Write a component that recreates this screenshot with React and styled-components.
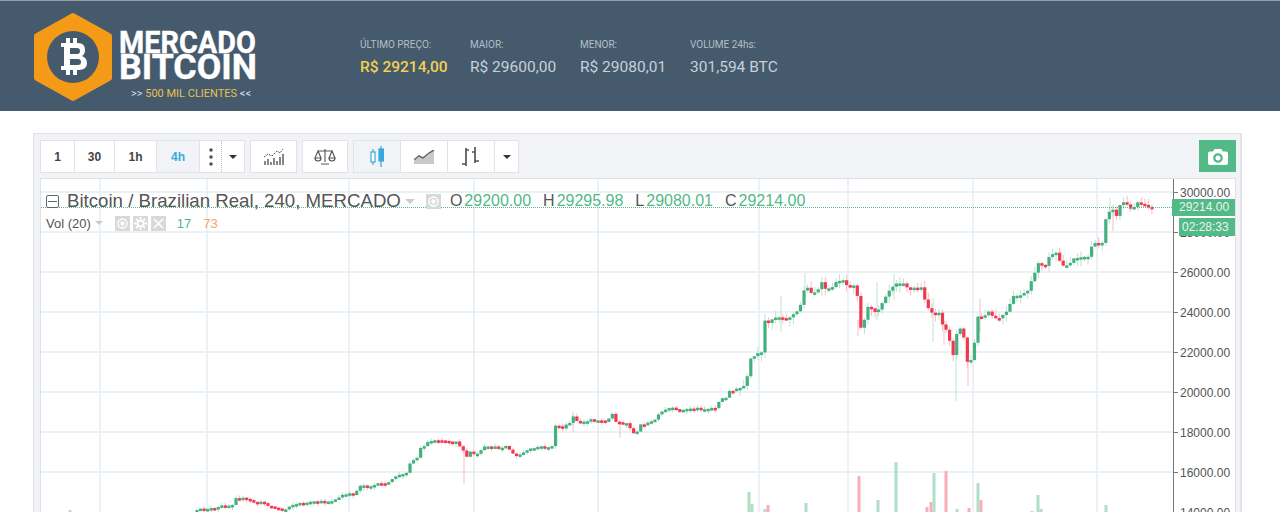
import React from "react";
import styled, { createGlobalStyle } from "styled-components";

const GREEN = "#53b987";
const RED = "#f0394f";

const GlobalStyle = createGlobalStyle`
  html, body { margin: 0; height: 512px; overflow: hidden; background: #fff; }
  body { font-family: "Liberation Sans", Arial, sans-serif; }
`;

const Header = styled.header`
  height: 110px;
  box-sizing: content-box;
  border-top: 1px solid #9a9ea2;
  background: #455a6c;
  display: flex;
`;
const Brand = styled.div`
  width: 360px;
  padding: 11px 0 0 33px;
  box-sizing: border-box;
  display: flex;
  gap: 6px;
`;
const BrandText = styled.div`
  display: flex;
  flex-direction: column;
  padding-top: 18px;
`;
const BrandLine = styled.div`
  font-family: Roboto, sans-serif;
  font-weight: 700;
  color: #fff;
  white-space: nowrap;
  -webkit-text-stroke: 0.4px #fff;
  transform-origin: left top;
  transform: scaleX(${(p) => p.$sx});
  font-size: ${(p) => p.$size}px;
  line-height: ${(p) => p.$lh}px;
`;
const Clients = styled.div`
  font-family: Roboto, sans-serif;
  font-size: 11px;
  line-height: 12px;
  margin: 7px 0 0 12px;
  color: #d5dde3;
  white-space: nowrap;
  span { color: #e6c153; }
`;
const Stats = styled.div`
  display: flex;
  padding-top: 38px;
`;
const Stat = styled.div`
  width: 110px;
  font-family: Roboto, sans-serif;
`;
const StatLabel = styled.div`
  font-size: 10px;
  line-height: 12px;
  color: #b4bfc8;
`;
const StatValue = styled.div`
  font-size: 15.5px;
  line-height: 20px;
  margin-top: 6px;
  white-space: nowrap;
  font-weight: ${(p) => (p.$hi ? 500 : 400)};
  color: ${(p) => (p.$hi ? "#f5cf50" : "#c6d1da")};
`;

const Frame = styled.section`
  margin: 22px 38px 0 33px;
  height: 400px;
  background: #f1f3f6;
  border: 1px solid #e0e3e8;
  border-width: 1px 2px 0 1px;
  padding: 6px 4px 0 6px;
  box-sizing: border-box;
  width: 1209px;
`;
const Toolbar = styled.div`
  display: flex;
  gap: 5px;
  height: 33px;
  margin-bottom: 5px;
`;
const Group = styled.div`
  display: flex;
  gap: 1px;
  background: #e0e3e8;
  border: 1px solid #e0e3e8;
  height: 33px;
  box-sizing: border-box;
`;
const Btn = styled.div`
  width: ${(p) => p.$w}px;
  display: flex;
  align-items: center;
  justify-content: center;
  background: ${(p) => (p.$on ? "#f1f3f6" : "#fff")};
  color: ${(p) => (p.$on ? "#38a9e0" : "#444")};
  font-size: 12px;
  font-weight: 700;
`;
const DotDivider = styled(Btn)`
  border-right: 1px dotted #bbb;
  margin-right: -1px;
`;
const Spacer = styled.div`
  flex: 1;
`;
const Camera = styled.div`
  width: 37px;
  height: 32px;
  background: ${GREEN};
  display: flex;
  align-items: center;
  justify-content: center;
`;
const Chart = styled.div`
  position: relative;
  height: 340px;
  display: flex;
  background: #fff;
  border: 1px solid #dfe3e8;
  border-bottom: 0;
  overflow: hidden;
`;
const Plot = styled.svg`
  display: block;
  width: 1132px;
  height: 333px;
  flex: none;
`;
const Axis = styled.div`
  flex: 1;
  border-left: 1px solid #777;
  padding-top: 6px;
  display: flex;
  flex-direction: column;
`;
const Tick = styled.div`
  flex: none;
  height: 40px;
  line-height: 16px;
  font-size: 12px;
  color: #555;
  padding-left: 6px;
  position: relative;
  &::before {
    content: "";
    position: absolute;
    left: 0;
    top: 7px;
    width: 4px;
    height: 1px;
    background: #777;
  }
`;
const Legend = styled.div`
  position: absolute;
  left: 5px;
  top: 11px;
  color: #555;
  white-space: nowrap;
`;
const TitleRow = styled.div`
  display: flex;
  align-items: center;
  height: 22px;
`;
const Collapse = styled.span`
  width: 11px;
  height: 11px;
  border: 1px solid #666;
  border-radius: 2px;
  margin-right: 8px;
  position: relative;
  &::after {
    content: "";
    position: absolute;
    left: 1px;
    right: 1px;
    top: 5px;
    height: 1px;
    background: #666;
  }
`;
const Title = styled.span`
  font-size: 18.67px;
`;
const Caret = styled.span`
  width: 0;
  height: 0;
  border: ${(p) => p.$s || 4}px solid transparent;
  border-top-color: ${(p) => p.$c || "#ccc"};
  border-bottom: 0;
  margin-left: ${(p) => p.$ml || 0}px;
`;
const IconBox = styled.span`
  width: 15px;
  height: 15px;
  background: #d9d9d9;
  margin-left: ${(p) => p.$ml || 0}px;
  display: inline-flex;
  align-items: center;
  justify-content: center;
`;
const Ohlc = styled.span`
  font-size: 16px;
  margin-left: ${(p) => p.$ml}px;
  b {
    font-weight: 400;
    color: ${GREEN};
    margin-left: 2px;
  }
`;
const VolRow = styled.div`
  display: flex;
  align-items: center;
  height: 18px;
  margin-top: 2px;
  font-size: 13px;
`;
const VolNum = styled.span`
  margin-left: ${(p) => p.$ml}px;
  color: ${(p) => p.$c};
`;
const PriceTag = styled.div`
  position: absolute;
  right: 0;
  top: ${(p) => p.$top}px;
  width: ${(p) => p.$w}px;
  height: ${(p) => p.$h}px;
  line-height: ${(p) => p.$h}px;
  background: ${GREEN};
  color: #eaf7f0;
  font-size: 12px;
  padding-left: ${(p) => p.$pl}px;
  box-sizing: border-box;
`;

const PTS = [[197,511],[205,508],[215,509],[222,506],[232,505],[236,497],[245,499],[255,502],[265,503],[270,506],[280,509],[285,510],[290,505],[297,504],[305,503],[320,502],[330,501],[338,499],[342,495],[355,494],[360,485],[370,486],[380,484],[390,483],[395,476],[406,474],[408,464],[418,457],[420,449],[428,442],[437,439],[447,441],[457,441],[462,450],[467,457],[470,452],[477,455],[485,447],[492,448],[507,446],[515,457],[527,451],[537,447],[552,447],[555,425],[563,428],[570,423],[572,415],[577,422],[587,422],[590,419],[607,421],[612,413],[615,422],[627,423],[632,432],[637,433],[640,425],[650,423],[657,418],[660,413],[670,408],[680,411],[692,408],[707,409],[717,407],[720,399],[728,398],[730,387],[733,391],[743,387],[747,382],[748,363],[752,358],[758,354],[763,353],[764,320],[767,323],[775,317],[783,317],[785,320],[797,312],[802,302],[805,284],[810,292],[817,292],[822,283],[827,291],[837,282],[842,278],[848,287],[857,283],[858,323],[862,330],[867,307],[877,312],[887,293],[895,283],[903,282],[908,288],[923,288],[925,300],[930,312],[933,315],[938,310],[942,325],[948,333],[953,355],[958,327],[963,332],[968,366],[973,357],[977,317],[983,318],[988,312],[997,320],[1007,312],[1013,297],[1027,293],[1033,278],[1038,262],[1045,268],[1048,257],[1058,253],[1061,267],[1070,263],[1075,257],[1088,257],[1092,245],[1103,242],[1105,220],[1112,205],[1115,223],[1118,207],[1125,201],[1130,210],[1138,202],[1147,205],[1152,208]];

const WICKS = [[781,296,332,1],[877,282,320,1],[894,274,300,1],[933,298,342,1],[956,355,401,1],[968,360,386,0],[858,320,336,0],[944,320,345,0],[980,299,332,0],[805,273,290,1],[464,445,484,0],[620,420,438,0],[573,412,432,0],[1113,205,231,0],[1110,198,215,1]];

const VOLS = [[70,510,1],[749,492,1],[752,504,1],[765,509,1],[768,505,0],[806,503,1],[859,476,0],[878,500,1],[896,462,1],[927,507,0],[931,502,0],[934,473,1],[946,471,0],[957,509,1],[969,508,0],[978,483,1],[981,500,0],[1032,511,1],[1038,495,1],[1041,509,1],[1106,505,1]];

const GRID_X = [100, 207, 349, 474, 598, 759, 848, 973, 1097];
const GRID_Y = [192, 232, 272, 312, 352, 392, 432, 472];
const TICKS = ["30000.00", "28000.00", "26000.00", "24000.00", "22000.00", "20000.00", "18000.00", "16000.00", "14000.00"];

function buildCandles() {
  let seed = 12345;
  const rnd = () => {
    seed = (seed * 16807) % 2147483647;
    return seed / 2147483647;
  };
  const at = (x) => {
    for (let i = 1; i < PTS.length; i++) {
      if (x <= PTS[i][0]) {
        const [x0, y0] = PTS[i - 1];
        const [x1, y1] = PTS[i];
        return y0 + ((y1 - y0) * (x - x0)) / (x1 - x0);
      }
    }
    return PTS[PTS.length - 1][1];
  };
  const out = [];
  let prev = at(197);
  for (let x = 197; x <= 1153; x += 3.55) {
    const close = at(x) + (rnd() - 0.5) * 2.4;
    const up = close <= prev;
    const top = Math.min(prev, close);
    const h = Math.max(Math.abs(close - prev), 2.5);
    const reach = x > 740 ? 7 : 3;
    out.push({ x, top, h, up, hi: top - rnd() * reach, lo: top + h + rnd() * reach });
    prev = close;
  }
  return out;
}

const CANDLES = buildCandles();

function Logo() {
  return (
    <svg width="80" height="90" viewBox="32 11 80 90">
      <path d="M72 15 L108 35 V77 L72 97 L36 77 V35 Z" fill="#f49a17" stroke="#f49a17" strokeWidth="6" strokeLinejoin="round" />
      <circle cx="72" cy="56" r="26" fill="#455a6c" />
      <g fill="#fff">
        <rect x="65" y="37" width="4" height="6" />
        <rect x="72" y="37" width="4" height="6" />
        <rect x="65" y="68" width="4" height="6" />
        <rect x="72" y="68" width="4" height="6" />
        <path fillRule="evenodd" d="M60 42 H77 Q84 42 84 49 Q84 53 81 55 Q86 57 86 62 Q86 69 78 69 H60 V65 H63 V46 H60 Z M69 47 V53 H76 Q79 53 79 50 Q79 47 76 47 Z M69 58 V64 H77 Q80 64 80 61 Q80 58 77 58 Z" />
      </g>
    </svg>
  );
}

function StudyIcon() {
  return (
    <svg width="22" height="20" viewBox="0 0 22 20" fill="none" stroke="#555">
      <path d="M2 18v-4M5 18v-6M8 18v-3M11 18v-7M14 18v-4M17 18v-8M20 18v-11" strokeWidth="1.4" />
      <path d="M1 10l4-3 4 2 5-5 3 2 3-4" strokeWidth="1" strokeDasharray="2 1" />
    </svg>
  );
}

function ScaleIcon() {
  return (
    <svg width="22" height="18" viewBox="0 0 22 18" fill="none" stroke="#555" strokeWidth="1.1">
      <path d="M11 1v13M7 16h8M4 3h14" />
      <path d="M4 3L1 10h6zM18 3l-3 7h6z" />
      <path d="M1 10a3 3 0 0 0 6 0M15 10a3 3 0 0 0 6 0" />
    </svg>
  );
}

function CandleIcon() {
  return (
    <svg width="15" height="22" viewBox="0 0 15 22" fill="none" stroke="#38a9e0" strokeWidth="1.2">
      <rect x="1" y="6" width="4" height="10" fill="#fff" />
      <path d="M3 3v3M3 16v3" />
      <rect x="9" y="3" width="4.4" height="12" fill="#38a9e0" />
      <path d="M11 0v3M11 15v6" />
    </svg>
  );
}

function AreaIcon() {
  return (
    <svg width="21" height="14" viewBox="0 0 21 14">
      <path d="M0 11l5-4 4 2 6-5 5-3v13H0z" fill="#c9c9c9" />
      <path d="M0 10l5-4 4 2 6-5 5-3" fill="none" stroke="#666" strokeWidth="1.5" />
    </svg>
  );
}

function BarsIcon() {
  return (
    <svg width="20" height="22" viewBox="0 0 20 22" fill="none" stroke="#555" strokeWidth="1.7">
      <path d="M5 2v18M5 4h3M5 18H1M14 1v16M14 6h-3M14 15h4" />
    </svg>
  );
}

function CameraIcon() {
  return (
    <svg width="20" height="17" viewBox="0 0 20 17">
      <path fillRule="evenodd" fill="#fff" d="M6.5 1h7l1.4 2.4H18a2 2 0 0 1 2 2V15a2 2 0 0 1-2 2H2a2 2 0 0 1-2-2V5.400a2 2 0 0 1 2-2h3.100z M10 5.200a4.800 4.800 0 1 0 0 9.600a4.800 4.800 0 0 0 0-9.600z M10 7.500a2.500 2.500 0 1 1 0 5a2.500 2.500 0 0 1 0-5z" />
    </svg>
  );
}

function Eye() {
  return (
    <svg width="11" height="11" viewBox="0 0 11 11" fill="none" stroke="#fff" strokeWidth="1.4">
      <circle cx="5.500" cy="5.500" r="4.500" />
      <circle cx="5.500" cy="5.500" r="1.500" fill="#fff" />
    </svg>
  );
}

function Gear() {
  return (
    <svg width="13" height="13" viewBox="0 0 13 13" fill="none" stroke="#fff">
      <circle cx="6.500" cy="6.500" r="3" strokeWidth="2" />
      <path d="M6.500 0v2.500M6.500 10.500V13M0 6.500h2.500M10.500 6.500H13M2 2l1.700 1.700M9.300 9.300L11 11M2 11l1.700-1.700M9.300 3.700L11 2" strokeWidth="1.800" />
    </svg>
  );
}

function Cross() {
  return (
    <svg width="11" height="11" viewBox="0 0 11 11" stroke="#fff" strokeWidth="1.6">
      <path d="M1 1l9 9M10 1l-9 9" />
    </svg>
  );
}

function PriceChart() {
  return (
    <Plot viewBox="41 179 1132 333">
      {GRID_X.map((x) => (
        <line key={x} x1={x} x2={x} y1="179" y2="512" stroke="#e4eef5" strokeWidth="1.500" />
      ))}
      {GRID_Y.map((y) => (
        <line key={y} x1="41" x2="1173" y1={y} y2={y} stroke="#e4eef5" strokeWidth="1.500" />
      ))}
      {VOLS.map(([x, y, up]) => (
        <rect key={x} x={x - 1.500} y={y} width="3" height={512 - y} fill={up ? "#b0dfc8" : "#f8aeb8"} />
      ))}
      {WICKS.map(([x, y1, y2, up]) => (
        <line key={x} x1={x} x2={x} y1={y1} y2={y2} stroke={up ? "#bfe3d1" : "#f9bcc5"} strokeWidth="1" />
      ))}
      {CANDLES.map((c) => (
        <g key={c.x}>
          <line x1={c.x} x2={c.x} y1={c.hi} y2={c.lo} stroke={c.up ? "#bfe3d1" : "#f9bcc5"} strokeWidth="1" />
          <rect x={c.x - 1.600} y={c.top} width="3.200" height={c.h} fill={c.up ? "#45b07f" : RED} />
        </g>
      ))}
      <line x1="41" x2="1173" y1="207.500" y2="207.500" stroke={GREEN} strokeWidth="1" strokeDasharray="1 1" />
    </Plot>
  );
}

export default function App() {
  return (
    <>
      <GlobalStyle />
      <Header>
        <Brand>
          <Logo />
          <BrandText>
            <BrandLine $size={31} $lh={25} $sx={0.93}>MERCADO</BrandLine>
            <BrandLine $size={35} $lh={26} $sx={1.02}>BITCOIN</BrandLine>
            <Clients>&gt;&gt; <span>500 MIL CLIENTES</span> &lt;&lt;</Clients>
          </BrandText>
        </Brand>
        <Stats>
          <Stat>
            <StatLabel>ÚLTIMO PREÇO:</StatLabel>
            <StatValue $hi>R$ 29214,00</StatValue>
          </Stat>
          <Stat>
            <StatLabel>MAIOR:</StatLabel>
            <StatValue>R$ 29600,00</StatValue>
          </Stat>
          <Stat>
            <StatLabel>MENOR:</StatLabel>
            <StatValue>R$ 29080,01</StatValue>
          </Stat>
          <Stat>
            <StatLabel>VOLUME 24hs:</StatLabel>
            <StatValue>301,594 BTC</StatValue>
          </Stat>
        </Stats>
      </Header>
      <Frame>
        <Toolbar>
          <Group>
            <Btn $w={33}>1</Btn>
            <Btn $w={39}>30</Btn>
            <Btn $w={41}>1h</Btn>
            <Btn $w={42} $on>4h</Btn>
            <DotDivider $w={21}>
              <svg width="4" height="18" viewBox="0 0 4 18" fill="#555">
                <circle cx="2" cy="2" r="1.800" />
                <circle cx="2" cy="9" r="1.800" />
                <circle cx="2" cy="16" r="1.800" />
              </svg>
            </DotDivider>
            <Btn $w={22}><Caret $s={4.500} $c="#333" /></Btn>
          </Group>
          <Group>
            <Btn $w={45}><StudyIcon /></Btn>
          </Group>
          <Group>
            <Btn $w={44}><ScaleIcon /></Btn>
          </Group>
          <Group>
            <Btn $w={46} $on><CandleIcon /></Btn>
            <Btn $w={46}><AreaIcon /></Btn>
            <Btn $w={46}><BarsIcon /></Btn>
            <Btn $w={23}><Caret $s={4.500} $c="#333" /></Btn>
          </Group>
          <Spacer />
          <Camera><CameraIcon /></Camera>
        </Toolbar>
        <Chart>
          <PriceChart />
          <Axis>
            {TICKS.map((t) => (
              <Tick key={t}>{t}</Tick>
            ))}
          </Axis>
          <Legend>
            <TitleRow>
              <Collapse />
              <Title>Bitcoin / Brazilian Real, 240, MERCADO</Title>
              <Caret $ml={4} $s={5} />
              <IconBox $ml={11}><Eye /></IconBox>
              <Ohlc $ml={9}>O<b>29200.00</b></Ohlc>
              <Ohlc $ml={12}>H<b>29295.98</b></Ohlc>
              <Ohlc $ml={12}>L<b>29080.01</b></Ohlc>
              <Ohlc $ml={12}>C<b>29214.00</b></Ohlc>
            </TitleRow>
            <VolRow>
              Vol (20)
              <Caret $ml={4} $s={4.500} />
              <IconBox $ml={12}><Eye /></IconBox>
              <IconBox $ml={3}><Gear /></IconBox>
              <IconBox $ml={3}><Cross /></IconBox>
              <VolNum $ml={11} $c={GREEN}>17</VolNum>
              <VolNum $ml={12} $c="#f5a26c">73</VolNum>
            </VolRow>
          </Legend>
          <PriceTag $top={20} $w={63} $h={17} $pl={7}>29214.00</PriceTag>
          <PriceTag $top={39} $w={56} $h={18} $pl={3}>02:28:33</PriceTag>
        </Chart>
      </Frame>
    </>
  );
}
